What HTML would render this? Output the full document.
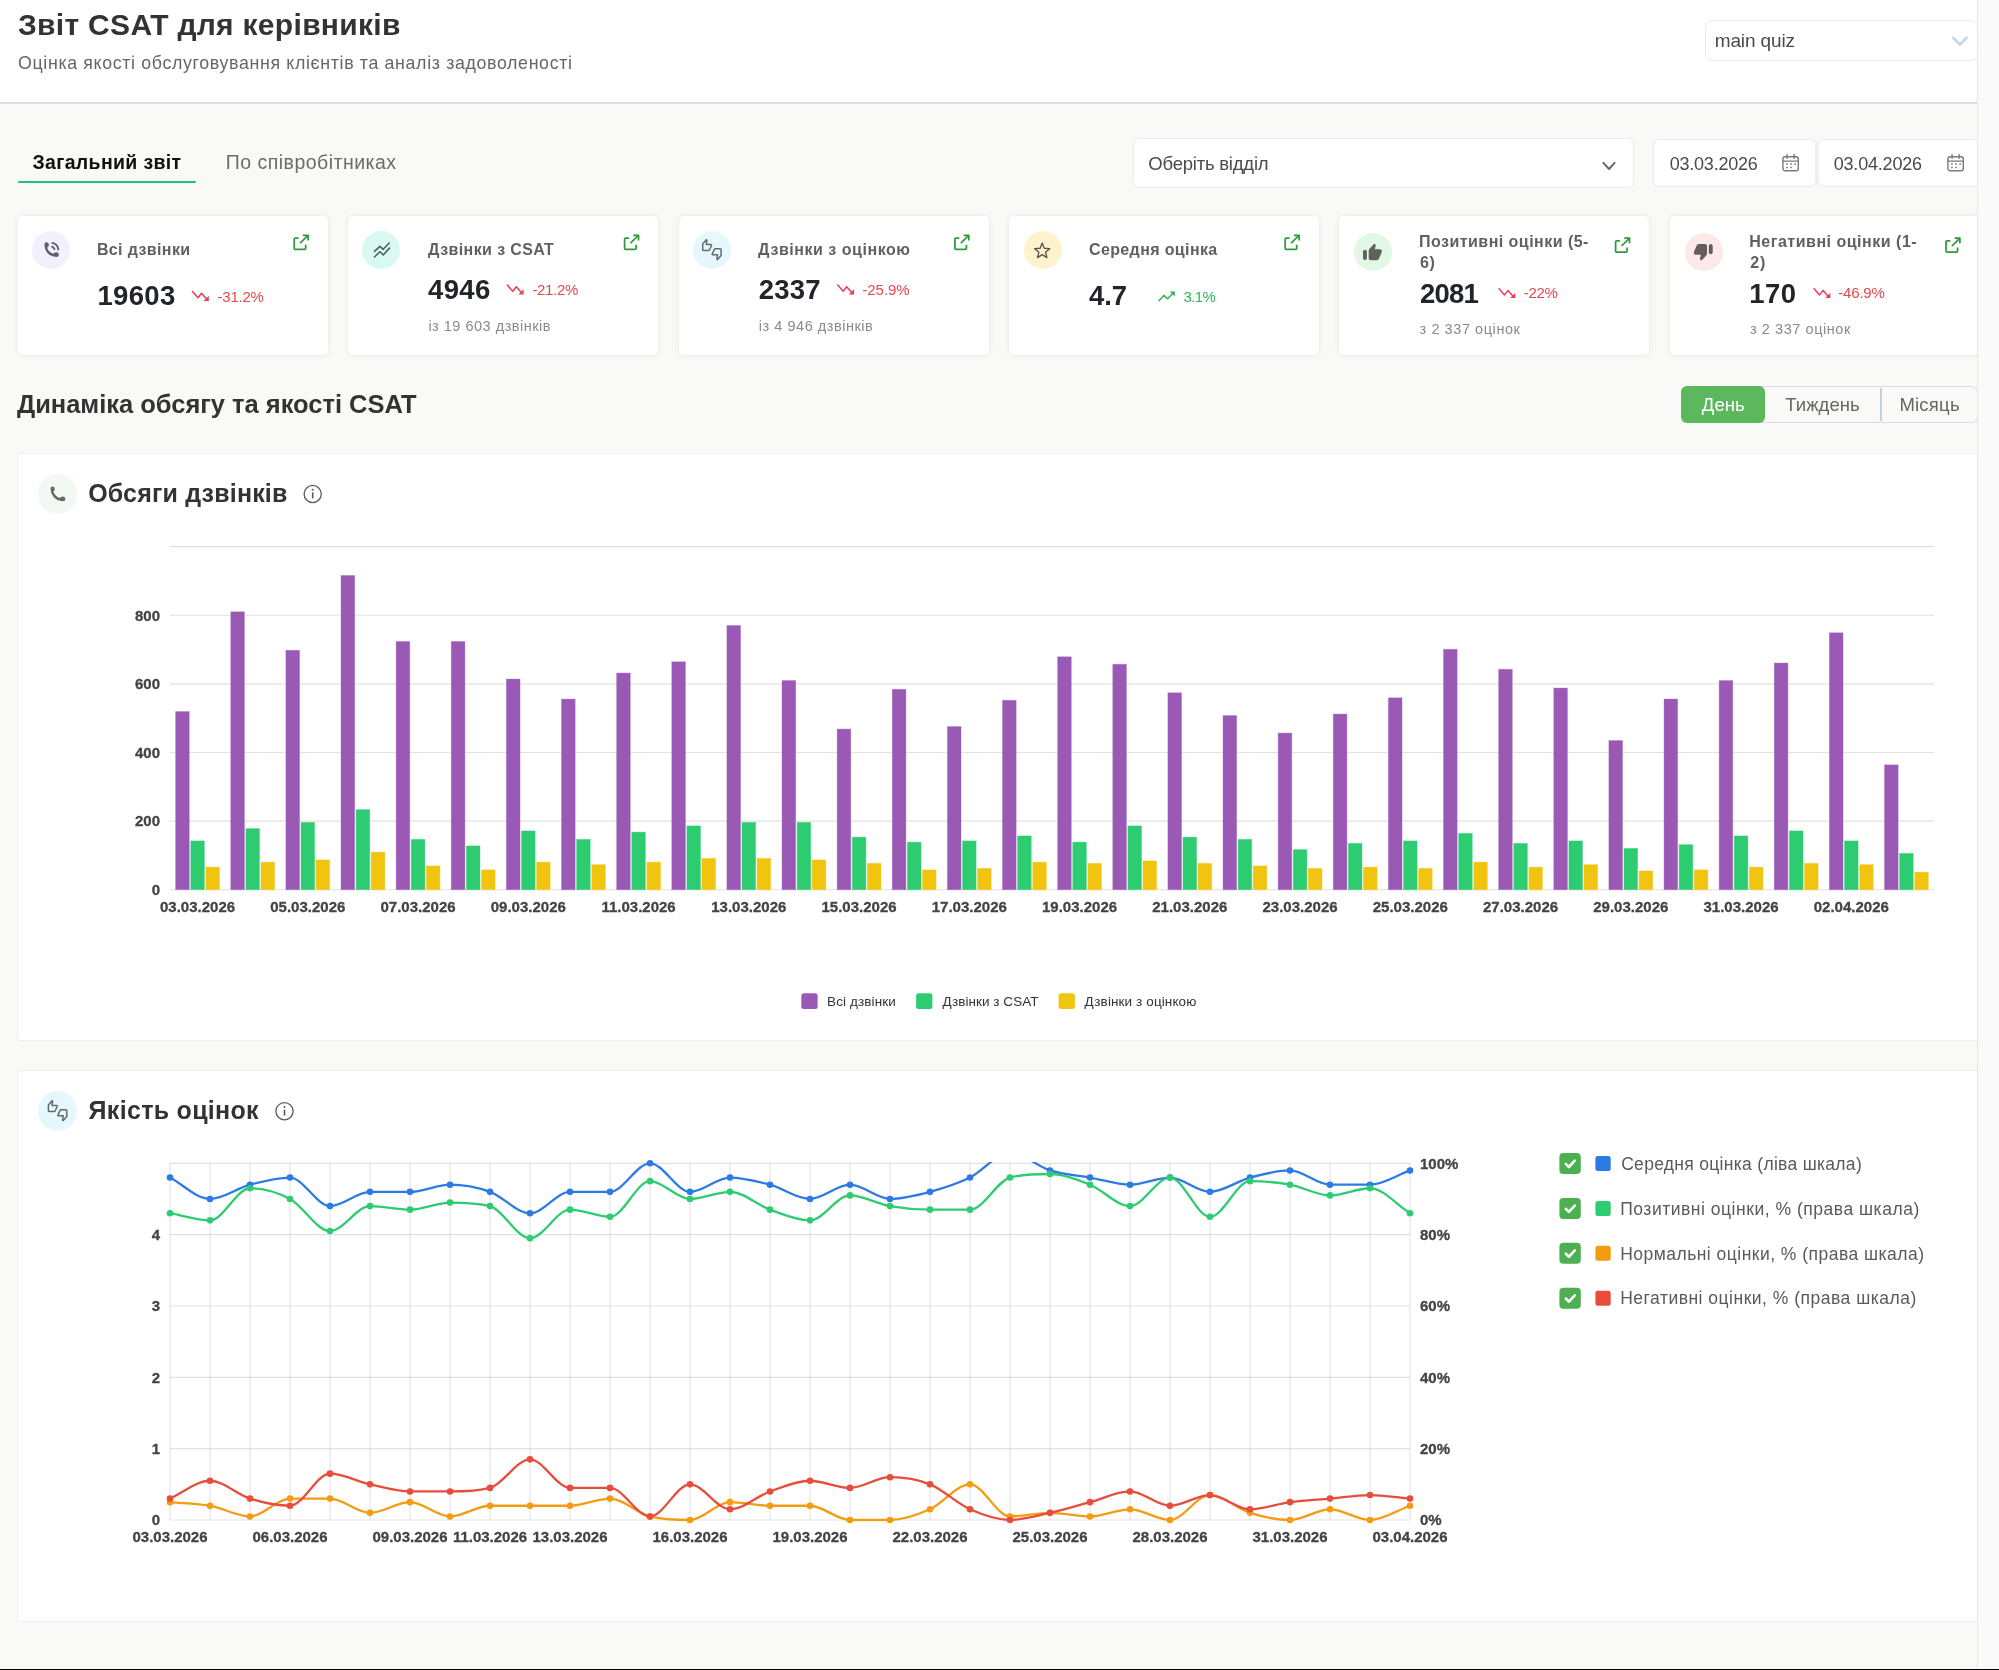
<!DOCTYPE html>
<html lang="uk"><head><meta charset="utf-8"><title>CSAT</title>
<style>
*{box-sizing:border-box;margin:0;padding:0}
html,body{width:1999px;height:1670px;overflow:hidden;background:#f9f9f7;font-family:"Liberation Sans",sans-serif;color:#333}
.abs{position:absolute}
#page{position:relative;width:1999px;height:1670px;overflow:hidden;background:#f9f9f7}
.card{position:absolute;background:#fff;border-radius:5px;box-shadow:0 0 4px rgba(70,150,90,.16)}
.circ{position:absolute;border-radius:50%}
.panel{position:absolute;background:#fff;border:1.25px solid #efefef;border-radius:2px}
svg{position:absolute;left:0;top:0;overflow:visible;will-change:transform}
svg text{font-family:"Liberation Sans",sans-serif}
.ax{font-weight:bold;font-size:15px;fill:#444;stroke:#444;stroke-width:0.3px}
.inp{position:absolute;background:#fff;border:1.25px solid #e6ebf1;border-radius:6px}
</style></head><body><div id="page">

<!-- header -->
<div class="abs" style="left:0;top:0;width:1999px;height:102px;background:#fff"></div>
<div class="abs" style="left:0;top:102px;width:1999px;height:2px;background:#dedede"></div>
<div class="abs" style="left:1705.2px;top:20.2px;width:273.2px;height:40.4px;background:#fff;border:1.25px solid #e0f2e1;border-radius:7px"></div>

<!-- tabs -->
<div class="abs" style="left:17.5px;top:181px;width:178.8px;height:2.2px;background:#22c17a;border-radius:1px"></div>

<!-- filters -->
<div class="inp" style="left:1133px;top:138px;width:500.5px;height:50.3px;border-color:#ececec"></div>
<div class="inp" style="left:1653.4px;top:138.8px;width:162.4px;height:47.8px"></div>
<div class="inp" style="left:1818px;top:138.8px;width:180px;height:47.8px"></div>
<div class="abs" style="left:1815.4px;top:142px;width:3.4px;height:41.5px;background:#edf1f6"></div>

<!-- KPI cards -->
<div class="card" style="left:18.0px;top:216.3px;width:310px;height:138.6px"></div>
<div class="circ" style="left:32.25px;top:230.80px;width:38.2px;height:38.2px;background:#f3effd"></div>
<div class="card" style="left:348.4px;top:216.3px;width:310px;height:138.6px"></div>
<div class="circ" style="left:362.20px;top:230.80px;width:38.2px;height:38.2px;background:#d9faf3"></div>
<div class="card" style="left:678.7px;top:216.3px;width:310px;height:138.6px"></div>
<div class="circ" style="left:692.80px;top:230.80px;width:38.2px;height:38.2px;background:#e6f8fd"></div>
<div class="card" style="left:1009.0px;top:216.3px;width:310px;height:138.6px"></div>
<div class="circ" style="left:1023.50px;top:230.80px;width:38.2px;height:38.2px;background:#fef3cd"></div>
<div class="card" style="left:1339.4px;top:216.3px;width:310px;height:138.6px"></div>
<div class="circ" style="left:1354.00px;top:233.30px;width:38.2px;height:38.2px;background:#e3f7e5"></div>
<div class="card" style="left:1669.8px;top:216.3px;width:310px;height:138.6px"></div>
<div class="circ" style="left:1684.60px;top:233.30px;width:38.2px;height:38.2px;background:#fde8ea"></div>

<!-- segmented control -->
<div class="abs" style="left:1690px;top:386px;width:288px;height:36.6px;border:1.25px solid #d5dde7;border-radius:7px;background:#f9f9f7"></div>
<div class="abs" style="left:1681.4px;top:386px;width:83.5px;height:36.6px;border-radius:6px;background:#5cb85c"></div>
<div class="abs" style="left:1880.4px;top:388px;width:1.5px;height:32.6px;background:#c3d0e0"></div>

<!-- panels -->
<div class="panel" style="left:17.4px;top:453px;width:1990px;height:587.6px"></div>
<div class="circ" style="left:37.9px;top:474.1px;width:39.6px;height:39.6px;background:#f2f9f5"></div>
<div class="panel" style="left:17.4px;top:1070.2px;width:1990px;height:551.6px"></div>
<div class="circ" style="left:37.8px;top:1091px;width:39.6px;height:39.6px;background:#e6f8fd"></div>

<svg width="1999" height="1670" viewBox="0 0 1999 1670">
<line x1="170.0" x2="1934.0" y1="889.70" y2="889.70" stroke="#e2e2e2" stroke-width="1.1"/>
<line x1="170.0" x2="1934.0" y1="821.08" y2="821.08" stroke="#e2e2e2" stroke-width="1.1"/>
<line x1="170.0" x2="1934.0" y1="752.46" y2="752.46" stroke="#e2e2e2" stroke-width="1.1"/>
<line x1="170.0" x2="1934.0" y1="683.84" y2="683.84" stroke="#e2e2e2" stroke-width="1.1"/>
<line x1="170.0" x2="1934.0" y1="615.22" y2="615.22" stroke="#e2e2e2" stroke-width="1.1"/>
<line x1="170.0" x2="1934.0" y1="546.60" y2="546.60" stroke="#e2e2e2" stroke-width="1.1"/>
<rect x="175.66" y="711.59" width="13.60" height="178.11" fill="#9b59b6" stroke="#9b59b6" stroke-opacity="0.4" stroke-width="0.9"/>
<rect x="190.76" y="840.90" width="13.60" height="48.80" fill="#2ecc71" stroke="#2ecc71" stroke-opacity="0.4" stroke-width="0.9"/>
<rect x="205.86" y="867.16" width="13.60" height="22.54" fill="#f1c40f" stroke="#f1c40f" stroke-opacity="0.4" stroke-width="0.9"/>
<rect x="230.79" y="611.79" width="13.60" height="277.91" fill="#9b59b6" stroke="#9b59b6" stroke-opacity="0.4" stroke-width="0.9"/>
<rect x="245.89" y="828.64" width="13.60" height="61.06" fill="#2ecc71" stroke="#2ecc71" stroke-opacity="0.4" stroke-width="0.9"/>
<rect x="260.99" y="862.16" width="13.60" height="27.54" fill="#f1c40f" stroke="#f1c40f" stroke-opacity="0.4" stroke-width="0.9"/>
<rect x="285.91" y="650.31" width="13.60" height="239.39" fill="#9b59b6" stroke="#9b59b6" stroke-opacity="0.4" stroke-width="0.9"/>
<rect x="301.01" y="822.39" width="13.60" height="67.31" fill="#2ecc71" stroke="#2ecc71" stroke-opacity="0.4" stroke-width="0.9"/>
<rect x="316.11" y="859.91" width="13.60" height="29.79" fill="#f1c40f" stroke="#f1c40f" stroke-opacity="0.4" stroke-width="0.9"/>
<rect x="341.04" y="575.52" width="13.60" height="314.18" fill="#9b59b6" stroke="#9b59b6" stroke-opacity="0.4" stroke-width="0.9"/>
<rect x="356.14" y="809.63" width="13.60" height="80.07" fill="#2ecc71" stroke="#2ecc71" stroke-opacity="0.4" stroke-width="0.9"/>
<rect x="371.24" y="852.16" width="13.60" height="37.54" fill="#f1c40f" stroke="#f1c40f" stroke-opacity="0.4" stroke-width="0.9"/>
<rect x="396.16" y="641.55" width="13.60" height="248.15" fill="#9b59b6" stroke="#9b59b6" stroke-opacity="0.4" stroke-width="0.9"/>
<rect x="411.26" y="839.40" width="13.60" height="50.30" fill="#2ecc71" stroke="#2ecc71" stroke-opacity="0.4" stroke-width="0.9"/>
<rect x="426.36" y="865.91" width="13.60" height="23.79" fill="#f1c40f" stroke="#f1c40f" stroke-opacity="0.4" stroke-width="0.9"/>
<rect x="451.29" y="641.55" width="13.60" height="248.15" fill="#9b59b6" stroke="#9b59b6" stroke-opacity="0.4" stroke-width="0.9"/>
<rect x="466.39" y="845.90" width="13.60" height="43.80" fill="#2ecc71" stroke="#2ecc71" stroke-opacity="0.4" stroke-width="0.9"/>
<rect x="481.49" y="869.91" width="13.60" height="19.79" fill="#f1c40f" stroke="#f1c40f" stroke-opacity="0.4" stroke-width="0.9"/>
<rect x="506.41" y="679.07" width="13.60" height="210.63" fill="#9b59b6" stroke="#9b59b6" stroke-opacity="0.4" stroke-width="0.9"/>
<rect x="521.51" y="830.90" width="13.60" height="58.80" fill="#2ecc71" stroke="#2ecc71" stroke-opacity="0.4" stroke-width="0.9"/>
<rect x="536.61" y="862.16" width="13.60" height="27.54" fill="#f1c40f" stroke="#f1c40f" stroke-opacity="0.4" stroke-width="0.9"/>
<rect x="561.54" y="699.08" width="13.60" height="190.62" fill="#9b59b6" stroke="#9b59b6" stroke-opacity="0.4" stroke-width="0.9"/>
<rect x="576.64" y="839.40" width="13.60" height="50.30" fill="#2ecc71" stroke="#2ecc71" stroke-opacity="0.4" stroke-width="0.9"/>
<rect x="591.74" y="864.66" width="13.60" height="25.04" fill="#f1c40f" stroke="#f1c40f" stroke-opacity="0.4" stroke-width="0.9"/>
<rect x="616.66" y="673.07" width="13.60" height="216.63" fill="#9b59b6" stroke="#9b59b6" stroke-opacity="0.4" stroke-width="0.9"/>
<rect x="631.76" y="832.15" width="13.60" height="57.55" fill="#2ecc71" stroke="#2ecc71" stroke-opacity="0.4" stroke-width="0.9"/>
<rect x="646.86" y="862.16" width="13.60" height="27.54" fill="#f1c40f" stroke="#f1c40f" stroke-opacity="0.4" stroke-width="0.9"/>
<rect x="671.79" y="661.81" width="13.60" height="227.89" fill="#9b59b6" stroke="#9b59b6" stroke-opacity="0.4" stroke-width="0.9"/>
<rect x="686.89" y="825.89" width="13.60" height="63.81" fill="#2ecc71" stroke="#2ecc71" stroke-opacity="0.4" stroke-width="0.9"/>
<rect x="701.99" y="858.41" width="13.60" height="31.29" fill="#f1c40f" stroke="#f1c40f" stroke-opacity="0.4" stroke-width="0.9"/>
<rect x="726.91" y="625.54" width="13.60" height="264.16" fill="#9b59b6" stroke="#9b59b6" stroke-opacity="0.4" stroke-width="0.9"/>
<rect x="742.01" y="822.39" width="13.60" height="67.31" fill="#2ecc71" stroke="#2ecc71" stroke-opacity="0.4" stroke-width="0.9"/>
<rect x="757.11" y="858.41" width="13.60" height="31.29" fill="#f1c40f" stroke="#f1c40f" stroke-opacity="0.4" stroke-width="0.9"/>
<rect x="782.04" y="680.57" width="13.60" height="209.13" fill="#9b59b6" stroke="#9b59b6" stroke-opacity="0.4" stroke-width="0.9"/>
<rect x="797.14" y="822.39" width="13.60" height="67.31" fill="#2ecc71" stroke="#2ecc71" stroke-opacity="0.4" stroke-width="0.9"/>
<rect x="812.24" y="859.91" width="13.60" height="29.79" fill="#f1c40f" stroke="#f1c40f" stroke-opacity="0.4" stroke-width="0.9"/>
<rect x="837.16" y="729.09" width="13.60" height="160.61" fill="#9b59b6" stroke="#9b59b6" stroke-opacity="0.4" stroke-width="0.9"/>
<rect x="852.26" y="837.15" width="13.60" height="52.55" fill="#2ecc71" stroke="#2ecc71" stroke-opacity="0.4" stroke-width="0.9"/>
<rect x="867.36" y="863.41" width="13.60" height="26.29" fill="#f1c40f" stroke="#f1c40f" stroke-opacity="0.4" stroke-width="0.9"/>
<rect x="892.29" y="689.32" width="13.60" height="200.38" fill="#9b59b6" stroke="#9b59b6" stroke-opacity="0.4" stroke-width="0.9"/>
<rect x="907.39" y="842.15" width="13.60" height="47.55" fill="#2ecc71" stroke="#2ecc71" stroke-opacity="0.4" stroke-width="0.9"/>
<rect x="922.49" y="869.91" width="13.60" height="19.79" fill="#f1c40f" stroke="#f1c40f" stroke-opacity="0.4" stroke-width="0.9"/>
<rect x="947.41" y="726.59" width="13.60" height="163.11" fill="#9b59b6" stroke="#9b59b6" stroke-opacity="0.4" stroke-width="0.9"/>
<rect x="962.51" y="840.90" width="13.60" height="48.80" fill="#2ecc71" stroke="#2ecc71" stroke-opacity="0.4" stroke-width="0.9"/>
<rect x="977.61" y="868.41" width="13.60" height="21.29" fill="#f1c40f" stroke="#f1c40f" stroke-opacity="0.4" stroke-width="0.9"/>
<rect x="1002.54" y="700.33" width="13.60" height="189.37" fill="#9b59b6" stroke="#9b59b6" stroke-opacity="0.4" stroke-width="0.9"/>
<rect x="1017.64" y="835.90" width="13.60" height="53.80" fill="#2ecc71" stroke="#2ecc71" stroke-opacity="0.4" stroke-width="0.9"/>
<rect x="1032.74" y="862.16" width="13.60" height="27.54" fill="#f1c40f" stroke="#f1c40f" stroke-opacity="0.4" stroke-width="0.9"/>
<rect x="1057.66" y="656.81" width="13.60" height="232.89" fill="#9b59b6" stroke="#9b59b6" stroke-opacity="0.4" stroke-width="0.9"/>
<rect x="1072.76" y="842.15" width="13.60" height="47.55" fill="#2ecc71" stroke="#2ecc71" stroke-opacity="0.4" stroke-width="0.9"/>
<rect x="1087.86" y="863.41" width="13.60" height="26.29" fill="#f1c40f" stroke="#f1c40f" stroke-opacity="0.4" stroke-width="0.9"/>
<rect x="1112.79" y="664.31" width="13.60" height="225.39" fill="#9b59b6" stroke="#9b59b6" stroke-opacity="0.4" stroke-width="0.9"/>
<rect x="1127.89" y="825.89" width="13.60" height="63.81" fill="#2ecc71" stroke="#2ecc71" stroke-opacity="0.4" stroke-width="0.9"/>
<rect x="1142.99" y="860.91" width="13.60" height="28.79" fill="#f1c40f" stroke="#f1c40f" stroke-opacity="0.4" stroke-width="0.9"/>
<rect x="1167.91" y="692.83" width="13.60" height="196.87" fill="#9b59b6" stroke="#9b59b6" stroke-opacity="0.4" stroke-width="0.9"/>
<rect x="1183.01" y="837.15" width="13.60" height="52.55" fill="#2ecc71" stroke="#2ecc71" stroke-opacity="0.4" stroke-width="0.9"/>
<rect x="1198.11" y="863.41" width="13.60" height="26.29" fill="#f1c40f" stroke="#f1c40f" stroke-opacity="0.4" stroke-width="0.9"/>
<rect x="1223.04" y="715.59" width="13.60" height="174.11" fill="#9b59b6" stroke="#9b59b6" stroke-opacity="0.4" stroke-width="0.9"/>
<rect x="1238.14" y="839.40" width="13.60" height="50.30" fill="#2ecc71" stroke="#2ecc71" stroke-opacity="0.4" stroke-width="0.9"/>
<rect x="1253.24" y="865.91" width="13.60" height="23.79" fill="#f1c40f" stroke="#f1c40f" stroke-opacity="0.4" stroke-width="0.9"/>
<rect x="1278.16" y="733.10" width="13.60" height="156.60" fill="#9b59b6" stroke="#9b59b6" stroke-opacity="0.4" stroke-width="0.9"/>
<rect x="1293.26" y="849.65" width="13.60" height="40.05" fill="#2ecc71" stroke="#2ecc71" stroke-opacity="0.4" stroke-width="0.9"/>
<rect x="1308.36" y="868.41" width="13.60" height="21.29" fill="#f1c40f" stroke="#f1c40f" stroke-opacity="0.4" stroke-width="0.9"/>
<rect x="1333.29" y="714.09" width="13.60" height="175.61" fill="#9b59b6" stroke="#9b59b6" stroke-opacity="0.4" stroke-width="0.9"/>
<rect x="1348.39" y="843.40" width="13.60" height="46.30" fill="#2ecc71" stroke="#2ecc71" stroke-opacity="0.4" stroke-width="0.9"/>
<rect x="1363.49" y="867.16" width="13.60" height="22.54" fill="#f1c40f" stroke="#f1c40f" stroke-opacity="0.4" stroke-width="0.9"/>
<rect x="1388.41" y="697.83" width="13.60" height="191.87" fill="#9b59b6" stroke="#9b59b6" stroke-opacity="0.4" stroke-width="0.9"/>
<rect x="1403.51" y="840.90" width="13.60" height="48.80" fill="#2ecc71" stroke="#2ecc71" stroke-opacity="0.4" stroke-width="0.9"/>
<rect x="1418.61" y="868.41" width="13.60" height="21.29" fill="#f1c40f" stroke="#f1c40f" stroke-opacity="0.4" stroke-width="0.9"/>
<rect x="1443.54" y="649.30" width="13.60" height="240.40" fill="#9b59b6" stroke="#9b59b6" stroke-opacity="0.4" stroke-width="0.9"/>
<rect x="1458.64" y="833.40" width="13.60" height="56.30" fill="#2ecc71" stroke="#2ecc71" stroke-opacity="0.4" stroke-width="0.9"/>
<rect x="1473.74" y="862.16" width="13.60" height="27.54" fill="#f1c40f" stroke="#f1c40f" stroke-opacity="0.4" stroke-width="0.9"/>
<rect x="1498.66" y="669.31" width="13.60" height="220.39" fill="#9b59b6" stroke="#9b59b6" stroke-opacity="0.4" stroke-width="0.9"/>
<rect x="1513.76" y="843.40" width="13.60" height="46.30" fill="#2ecc71" stroke="#2ecc71" stroke-opacity="0.4" stroke-width="0.9"/>
<rect x="1528.86" y="867.16" width="13.60" height="22.54" fill="#f1c40f" stroke="#f1c40f" stroke-opacity="0.4" stroke-width="0.9"/>
<rect x="1553.79" y="688.07" width="13.60" height="201.63" fill="#9b59b6" stroke="#9b59b6" stroke-opacity="0.4" stroke-width="0.9"/>
<rect x="1568.89" y="840.90" width="13.60" height="48.80" fill="#2ecc71" stroke="#2ecc71" stroke-opacity="0.4" stroke-width="0.9"/>
<rect x="1583.99" y="864.66" width="13.60" height="25.04" fill="#f1c40f" stroke="#f1c40f" stroke-opacity="0.4" stroke-width="0.9"/>
<rect x="1608.91" y="740.60" width="13.60" height="149.10" fill="#9b59b6" stroke="#9b59b6" stroke-opacity="0.4" stroke-width="0.9"/>
<rect x="1624.01" y="848.40" width="13.60" height="41.30" fill="#2ecc71" stroke="#2ecc71" stroke-opacity="0.4" stroke-width="0.9"/>
<rect x="1639.11" y="870.92" width="13.60" height="18.78" fill="#f1c40f" stroke="#f1c40f" stroke-opacity="0.4" stroke-width="0.9"/>
<rect x="1664.04" y="699.08" width="13.60" height="190.62" fill="#9b59b6" stroke="#9b59b6" stroke-opacity="0.4" stroke-width="0.9"/>
<rect x="1679.14" y="844.65" width="13.60" height="45.05" fill="#2ecc71" stroke="#2ecc71" stroke-opacity="0.4" stroke-width="0.9"/>
<rect x="1694.24" y="869.91" width="13.60" height="19.79" fill="#f1c40f" stroke="#f1c40f" stroke-opacity="0.4" stroke-width="0.9"/>
<rect x="1719.16" y="680.57" width="13.60" height="209.13" fill="#9b59b6" stroke="#9b59b6" stroke-opacity="0.4" stroke-width="0.9"/>
<rect x="1734.26" y="835.90" width="13.60" height="53.80" fill="#2ecc71" stroke="#2ecc71" stroke-opacity="0.4" stroke-width="0.9"/>
<rect x="1749.36" y="867.16" width="13.60" height="22.54" fill="#f1c40f" stroke="#f1c40f" stroke-opacity="0.4" stroke-width="0.9"/>
<rect x="1774.29" y="663.06" width="13.60" height="226.64" fill="#9b59b6" stroke="#9b59b6" stroke-opacity="0.4" stroke-width="0.9"/>
<rect x="1789.39" y="830.90" width="13.60" height="58.80" fill="#2ecc71" stroke="#2ecc71" stroke-opacity="0.4" stroke-width="0.9"/>
<rect x="1804.49" y="863.41" width="13.60" height="26.29" fill="#f1c40f" stroke="#f1c40f" stroke-opacity="0.4" stroke-width="0.9"/>
<rect x="1829.41" y="632.80" width="13.60" height="256.90" fill="#9b59b6" stroke="#9b59b6" stroke-opacity="0.4" stroke-width="0.9"/>
<rect x="1844.51" y="840.90" width="13.60" height="48.80" fill="#2ecc71" stroke="#2ecc71" stroke-opacity="0.4" stroke-width="0.9"/>
<rect x="1859.61" y="864.66" width="13.60" height="25.04" fill="#f1c40f" stroke="#f1c40f" stroke-opacity="0.4" stroke-width="0.9"/>
<rect x="1884.54" y="764.86" width="13.60" height="124.84" fill="#9b59b6" stroke="#9b59b6" stroke-opacity="0.4" stroke-width="0.9"/>
<rect x="1899.64" y="853.41" width="13.60" height="36.29" fill="#2ecc71" stroke="#2ecc71" stroke-opacity="0.4" stroke-width="0.9"/>
<rect x="1914.74" y="872.17" width="13.60" height="17.53" fill="#f1c40f" stroke="#f1c40f" stroke-opacity="0.4" stroke-width="0.9"/>
<text x="160" y="895.10" text-anchor="end" class="ax">0</text>
<text x="160" y="826.48" text-anchor="end" class="ax">200</text>
<text x="160" y="757.86" text-anchor="end" class="ax">400</text>
<text x="160" y="689.24" text-anchor="end" class="ax">600</text>
<text x="160" y="620.62" text-anchor="end" class="ax">800</text>
<text x="197.56" y="912.3" text-anchor="middle" class="ax">03.03.2026</text>
<text x="307.81" y="912.3" text-anchor="middle" class="ax">05.03.2026</text>
<text x="418.06" y="912.3" text-anchor="middle" class="ax">07.03.2026</text>
<text x="528.31" y="912.3" text-anchor="middle" class="ax">09.03.2026</text>
<text x="638.56" y="912.3" text-anchor="middle" class="ax">11.03.2026</text>
<text x="748.81" y="912.3" text-anchor="middle" class="ax">13.03.2026</text>
<text x="859.06" y="912.3" text-anchor="middle" class="ax">15.03.2026</text>
<text x="969.31" y="912.3" text-anchor="middle" class="ax">17.03.2026</text>
<text x="1079.56" y="912.3" text-anchor="middle" class="ax">19.03.2026</text>
<text x="1189.81" y="912.3" text-anchor="middle" class="ax">21.03.2026</text>
<text x="1300.06" y="912.3" text-anchor="middle" class="ax">23.03.2026</text>
<text x="1410.31" y="912.3" text-anchor="middle" class="ax">25.03.2026</text>
<text x="1520.56" y="912.3" text-anchor="middle" class="ax">27.03.2026</text>
<text x="1630.81" y="912.3" text-anchor="middle" class="ax">29.03.2026</text>
<text x="1741.06" y="912.3" text-anchor="middle" class="ax">31.03.2026</text>
<text x="1851.31" y="912.3" text-anchor="middle" class="ax">02.04.2026</text>
<clipPath id="lc"><rect x="166.0" y="1161.8999999999999" width="1248.0" height="359.50000000000006"/></clipPath>
<line x1="170.00" x2="170.00" y1="1163.3" y2="1520.0" stroke="rgba(0,0,0,0.115)" stroke-width="1.15"/>
<line x1="210.00" x2="210.00" y1="1163.3" y2="1520.0" stroke="rgba(0,0,0,0.115)" stroke-width="1.15"/>
<line x1="250.00" x2="250.00" y1="1163.3" y2="1520.0" stroke="rgba(0,0,0,0.115)" stroke-width="1.15"/>
<line x1="290.00" x2="290.00" y1="1163.3" y2="1520.0" stroke="rgba(0,0,0,0.115)" stroke-width="1.15"/>
<line x1="330.00" x2="330.00" y1="1163.3" y2="1520.0" stroke="rgba(0,0,0,0.115)" stroke-width="1.15"/>
<line x1="370.00" x2="370.00" y1="1163.3" y2="1520.0" stroke="rgba(0,0,0,0.115)" stroke-width="1.15"/>
<line x1="410.00" x2="410.00" y1="1163.3" y2="1520.0" stroke="rgba(0,0,0,0.115)" stroke-width="1.15"/>
<line x1="450.00" x2="450.00" y1="1163.3" y2="1520.0" stroke="rgba(0,0,0,0.115)" stroke-width="1.15"/>
<line x1="490.00" x2="490.00" y1="1163.3" y2="1520.0" stroke="rgba(0,0,0,0.115)" stroke-width="1.15"/>
<line x1="530.00" x2="530.00" y1="1163.3" y2="1520.0" stroke="rgba(0,0,0,0.115)" stroke-width="1.15"/>
<line x1="570.00" x2="570.00" y1="1163.3" y2="1520.0" stroke="rgba(0,0,0,0.115)" stroke-width="1.15"/>
<line x1="610.00" x2="610.00" y1="1163.3" y2="1520.0" stroke="rgba(0,0,0,0.115)" stroke-width="1.15"/>
<line x1="650.00" x2="650.00" y1="1163.3" y2="1520.0" stroke="rgba(0,0,0,0.115)" stroke-width="1.15"/>
<line x1="690.00" x2="690.00" y1="1163.3" y2="1520.0" stroke="rgba(0,0,0,0.115)" stroke-width="1.15"/>
<line x1="730.00" x2="730.00" y1="1163.3" y2="1520.0" stroke="rgba(0,0,0,0.115)" stroke-width="1.15"/>
<line x1="770.00" x2="770.00" y1="1163.3" y2="1520.0" stroke="rgba(0,0,0,0.115)" stroke-width="1.15"/>
<line x1="810.00" x2="810.00" y1="1163.3" y2="1520.0" stroke="rgba(0,0,0,0.115)" stroke-width="1.15"/>
<line x1="850.00" x2="850.00" y1="1163.3" y2="1520.0" stroke="rgba(0,0,0,0.115)" stroke-width="1.15"/>
<line x1="890.00" x2="890.00" y1="1163.3" y2="1520.0" stroke="rgba(0,0,0,0.115)" stroke-width="1.15"/>
<line x1="930.00" x2="930.00" y1="1163.3" y2="1520.0" stroke="rgba(0,0,0,0.115)" stroke-width="1.15"/>
<line x1="970.00" x2="970.00" y1="1163.3" y2="1520.0" stroke="rgba(0,0,0,0.115)" stroke-width="1.15"/>
<line x1="1010.00" x2="1010.00" y1="1163.3" y2="1520.0" stroke="rgba(0,0,0,0.115)" stroke-width="1.15"/>
<line x1="1050.00" x2="1050.00" y1="1163.3" y2="1520.0" stroke="rgba(0,0,0,0.115)" stroke-width="1.15"/>
<line x1="1090.00" x2="1090.00" y1="1163.3" y2="1520.0" stroke="rgba(0,0,0,0.115)" stroke-width="1.15"/>
<line x1="1130.00" x2="1130.00" y1="1163.3" y2="1520.0" stroke="rgba(0,0,0,0.115)" stroke-width="1.15"/>
<line x1="1170.00" x2="1170.00" y1="1163.3" y2="1520.0" stroke="rgba(0,0,0,0.115)" stroke-width="1.15"/>
<line x1="1210.00" x2="1210.00" y1="1163.3" y2="1520.0" stroke="rgba(0,0,0,0.115)" stroke-width="1.15"/>
<line x1="1250.00" x2="1250.00" y1="1163.3" y2="1520.0" stroke="rgba(0,0,0,0.115)" stroke-width="1.15"/>
<line x1="1290.00" x2="1290.00" y1="1163.3" y2="1520.0" stroke="rgba(0,0,0,0.115)" stroke-width="1.15"/>
<line x1="1330.00" x2="1330.00" y1="1163.3" y2="1520.0" stroke="rgba(0,0,0,0.115)" stroke-width="1.15"/>
<line x1="1370.00" x2="1370.00" y1="1163.3" y2="1520.0" stroke="rgba(0,0,0,0.115)" stroke-width="1.15"/>
<line x1="1410.00" x2="1410.00" y1="1163.3" y2="1520.0" stroke="rgba(0,0,0,0.115)" stroke-width="1.15"/>
<line x1="170.0" x2="1410.0" y1="1520.00" y2="1520.00" stroke="rgba(0,0,0,0.115)" stroke-width="1.15"/>
<line x1="170.0" x2="1410.0" y1="1448.66" y2="1448.66" stroke="rgba(0,0,0,0.115)" stroke-width="1.15"/>
<line x1="170.0" x2="1410.0" y1="1377.32" y2="1377.32" stroke="rgba(0,0,0,0.115)" stroke-width="1.15"/>
<line x1="170.0" x2="1410.0" y1="1305.98" y2="1305.98" stroke="rgba(0,0,0,0.115)" stroke-width="1.15"/>
<line x1="170.0" x2="1410.0" y1="1234.64" y2="1234.64" stroke="rgba(0,0,0,0.115)" stroke-width="1.15"/>
<line x1="170.0" x2="1410.0" y1="1163.30" y2="1163.30" stroke="rgba(0,0,0,0.115)" stroke-width="1.15"/>
<g clip-path="url(#lc)">
<path d="M170.00,1177.57C183.33,1184.70 196.67,1198.97 210.00,1198.97C223.33,1198.97 236.67,1188.27 250.00,1184.70C263.33,1181.13 276.67,1177.57 290.00,1177.57C303.33,1177.57 316.67,1206.10 330.00,1206.10C343.33,1206.10 356.67,1191.84 370.00,1191.84C383.33,1191.84 396.67,1191.84 410.00,1191.84C423.33,1191.84 436.67,1184.70 450.00,1184.70C463.33,1184.70 476.67,1187.08 490.00,1191.84C503.33,1196.59 516.67,1213.24 530.00,1213.24C543.33,1213.24 556.67,1191.84 570.00,1191.84C583.33,1191.84 596.67,1191.84 610.00,1191.84C623.33,1191.84 636.67,1163.30 650.00,1163.30C663.33,1163.30 676.67,1191.84 690.00,1191.84C703.33,1191.84 716.67,1177.57 730.00,1177.57C743.33,1177.57 756.67,1181.13 770.00,1184.70C783.33,1188.27 796.67,1198.97 810.00,1198.97C823.33,1198.97 836.67,1184.70 850.00,1184.70C863.33,1184.70 876.67,1198.97 890.00,1198.97C903.33,1198.97 916.67,1195.40 930.00,1191.84C943.33,1188.27 956.67,1184.11 970.00,1177.57C983.33,1171.03 996.67,1152.60 1010.00,1152.60C1023.33,1152.60 1036.67,1166.27 1050.00,1170.43C1063.33,1174.60 1076.67,1175.19 1090.00,1177.57C1103.33,1179.95 1116.67,1184.70 1130.00,1184.70C1143.33,1184.70 1156.67,1177.57 1170.00,1177.57C1183.33,1177.57 1196.67,1191.84 1210.00,1191.84C1223.33,1191.84 1236.67,1181.13 1250.00,1177.57C1263.33,1174.00 1276.67,1170.43 1290.00,1170.43C1303.33,1170.43 1316.67,1184.70 1330.00,1184.70C1343.33,1184.70 1356.67,1184.70 1370.00,1184.70C1383.33,1184.70 1396.67,1175.19 1410.00,1170.43" fill="none" stroke="#2c7be5" stroke-width="2.3" stroke-linejoin="round"/>
<path d="M170.00,1213.24C183.33,1215.62 196.67,1220.37 210.00,1220.37C223.33,1220.37 236.67,1188.27 250.00,1188.27C263.33,1188.27 276.67,1191.84 290.00,1198.97C303.33,1206.10 316.67,1231.07 330.00,1231.07C343.33,1231.07 356.67,1206.10 370.00,1206.10C383.33,1206.10 396.67,1209.67 410.00,1209.67C423.33,1209.67 436.67,1202.54 450.00,1202.54C463.33,1202.54 476.67,1202.54 490.00,1206.10C503.33,1209.67 516.67,1238.21 530.00,1238.21C543.33,1238.21 556.67,1209.67 570.00,1209.67C583.33,1209.67 596.67,1216.80 610.00,1216.80C623.33,1216.80 636.67,1181.13 650.00,1181.13C663.33,1181.13 676.67,1198.97 690.00,1198.97C703.33,1198.97 716.67,1191.84 730.00,1191.84C743.33,1191.84 756.67,1204.91 770.00,1209.67C783.33,1214.43 796.67,1220.37 810.00,1220.37C823.33,1220.37 836.67,1195.40 850.00,1195.40C863.33,1195.40 876.67,1203.73 890.00,1206.10C903.33,1208.48 916.67,1209.67 930.00,1209.67C943.33,1209.67 956.67,1209.67 970.00,1209.67C983.33,1209.67 996.67,1181.13 1010.00,1177.57C1023.33,1174.00 1036.67,1174.00 1050.00,1174.00C1063.33,1174.00 1076.67,1179.35 1090.00,1184.70C1103.33,1190.05 1116.67,1206.10 1130.00,1206.10C1143.33,1206.10 1156.67,1177.57 1170.00,1177.57C1183.33,1177.57 1196.67,1216.80 1210.00,1216.80C1223.33,1216.80 1236.67,1181.13 1250.00,1181.13C1263.33,1181.13 1276.67,1182.32 1290.00,1184.70C1303.33,1187.08 1316.67,1195.40 1330.00,1195.40C1343.33,1195.40 1356.67,1188.27 1370.00,1188.27C1383.33,1188.27 1396.67,1204.91 1410.00,1213.24" fill="none" stroke="#2ecc71" stroke-width="2.3" stroke-linejoin="round"/>
<path d="M170.00,1502.16C183.33,1503.35 196.67,1503.35 210.00,1505.73C223.33,1508.11 236.67,1516.43 250.00,1516.43C263.33,1516.43 276.67,1498.60 290.00,1498.60C303.33,1498.60 316.67,1498.60 330.00,1498.60C343.33,1498.60 356.67,1512.87 370.00,1512.87C383.33,1512.87 396.67,1502.16 410.00,1502.16C423.33,1502.16 436.67,1516.43 450.00,1516.43C463.33,1516.43 476.67,1505.73 490.00,1505.73C503.33,1505.73 516.67,1505.73 530.00,1505.73C543.33,1505.73 556.67,1505.73 570.00,1505.73C583.33,1505.73 596.67,1498.60 610.00,1498.60C623.33,1498.60 636.67,1512.87 650.00,1516.43C663.33,1520.00 676.67,1520.00 690.00,1520.00C703.33,1520.00 716.67,1502.16 730.00,1502.16C743.33,1502.16 756.67,1505.73 770.00,1505.73C783.33,1505.73 796.67,1505.73 810.00,1505.73C823.33,1505.73 836.67,1520.00 850.00,1520.00C863.33,1520.00 876.67,1520.00 890.00,1520.00C903.33,1520.00 916.67,1515.24 930.00,1509.30C943.33,1503.35 956.67,1484.33 970.00,1484.33C983.33,1484.33 996.67,1516.43 1010.00,1516.43C1023.33,1516.43 1036.67,1512.87 1050.00,1512.87C1063.33,1512.87 1076.67,1516.43 1090.00,1516.43C1103.33,1516.43 1116.67,1509.30 1130.00,1509.30C1143.33,1509.30 1156.67,1520.00 1170.00,1520.00C1183.33,1520.00 1196.67,1495.03 1210.00,1495.03C1223.33,1495.03 1236.67,1508.70 1250.00,1512.87C1263.33,1517.03 1276.67,1520.00 1290.00,1520.00C1303.33,1520.00 1316.67,1509.30 1330.00,1509.30C1343.33,1509.30 1356.67,1520.00 1370.00,1520.00C1383.33,1520.00 1396.67,1510.49 1410.00,1505.73" fill="none" stroke="#f39c12" stroke-width="2.3" stroke-linejoin="round"/>
<path d="M170.00,1498.60C183.33,1492.65 196.67,1480.76 210.00,1480.76C223.33,1480.76 236.67,1494.44 250.00,1498.60C263.33,1502.76 276.67,1505.73 290.00,1505.73C303.33,1505.73 316.67,1473.63 330.00,1473.63C343.33,1473.63 356.67,1481.36 370.00,1484.33C383.33,1487.30 396.67,1491.46 410.00,1491.46C423.33,1491.46 436.67,1491.46 450.00,1491.46C463.33,1491.46 476.67,1491.46 490.00,1487.90C503.33,1484.33 516.67,1459.36 530.00,1459.36C543.33,1459.36 556.67,1487.90 570.00,1487.90C583.33,1487.90 596.67,1487.90 610.00,1487.90C623.33,1487.90 636.67,1516.43 650.00,1516.43C663.33,1516.43 676.67,1484.33 690.00,1484.33C703.33,1484.33 716.67,1509.30 730.00,1509.30C743.33,1509.30 756.67,1496.22 770.00,1491.46C783.33,1486.71 796.67,1480.76 810.00,1480.76C823.33,1480.76 836.67,1487.90 850.00,1487.90C863.33,1487.90 876.67,1477.20 890.00,1477.20C903.33,1477.20 916.67,1478.98 930.00,1484.33C943.33,1489.68 956.67,1503.35 970.00,1509.30C983.33,1515.24 996.67,1520.00 1010.00,1520.00C1023.33,1520.00 1036.67,1515.84 1050.00,1512.87C1063.33,1509.89 1076.67,1505.73 1090.00,1502.16C1103.33,1498.60 1116.67,1491.46 1130.00,1491.46C1143.33,1491.46 1156.67,1505.73 1170.00,1505.73C1183.33,1505.73 1196.67,1495.03 1210.00,1495.03C1223.33,1495.03 1236.67,1509.30 1250.00,1509.30C1263.33,1509.30 1276.67,1503.95 1290.00,1502.16C1303.33,1500.38 1316.67,1499.79 1330.00,1498.60C1343.33,1497.41 1356.67,1495.03 1370.00,1495.03C1383.33,1495.03 1396.67,1497.41 1410.00,1498.60" fill="none" stroke="#e74c3c" stroke-width="2.3" stroke-linejoin="round"/>
</g>
<circle cx="170.00" cy="1177.57" r="3.3" fill="#2c7be5"/>
<circle cx="210.00" cy="1198.97" r="3.3" fill="#2c7be5"/>
<circle cx="250.00" cy="1184.70" r="3.3" fill="#2c7be5"/>
<circle cx="290.00" cy="1177.57" r="3.3" fill="#2c7be5"/>
<circle cx="330.00" cy="1206.10" r="3.3" fill="#2c7be5"/>
<circle cx="370.00" cy="1191.84" r="3.3" fill="#2c7be5"/>
<circle cx="410.00" cy="1191.84" r="3.3" fill="#2c7be5"/>
<circle cx="450.00" cy="1184.70" r="3.3" fill="#2c7be5"/>
<circle cx="490.00" cy="1191.84" r="3.3" fill="#2c7be5"/>
<circle cx="530.00" cy="1213.24" r="3.3" fill="#2c7be5"/>
<circle cx="570.00" cy="1191.84" r="3.3" fill="#2c7be5"/>
<circle cx="610.00" cy="1191.84" r="3.3" fill="#2c7be5"/>
<circle cx="650.00" cy="1163.30" r="3.3" fill="#2c7be5"/>
<circle cx="690.00" cy="1191.84" r="3.3" fill="#2c7be5"/>
<circle cx="730.00" cy="1177.57" r="3.3" fill="#2c7be5"/>
<circle cx="770.00" cy="1184.70" r="3.3" fill="#2c7be5"/>
<circle cx="810.00" cy="1198.97" r="3.3" fill="#2c7be5"/>
<circle cx="850.00" cy="1184.70" r="3.3" fill="#2c7be5"/>
<circle cx="890.00" cy="1198.97" r="3.3" fill="#2c7be5"/>
<circle cx="930.00" cy="1191.84" r="3.3" fill="#2c7be5"/>
<circle cx="970.00" cy="1177.57" r="3.3" fill="#2c7be5"/>
<circle cx="1050.00" cy="1170.43" r="3.3" fill="#2c7be5"/>
<circle cx="1090.00" cy="1177.57" r="3.3" fill="#2c7be5"/>
<circle cx="1130.00" cy="1184.70" r="3.3" fill="#2c7be5"/>
<circle cx="1170.00" cy="1177.57" r="3.3" fill="#2c7be5"/>
<circle cx="1210.00" cy="1191.84" r="3.3" fill="#2c7be5"/>
<circle cx="1250.00" cy="1177.57" r="3.3" fill="#2c7be5"/>
<circle cx="1290.00" cy="1170.43" r="3.3" fill="#2c7be5"/>
<circle cx="1330.00" cy="1184.70" r="3.3" fill="#2c7be5"/>
<circle cx="1370.00" cy="1184.70" r="3.3" fill="#2c7be5"/>
<circle cx="1410.00" cy="1170.43" r="3.3" fill="#2c7be5"/>
<circle cx="170.00" cy="1213.24" r="3.3" fill="#2ecc71"/>
<circle cx="210.00" cy="1220.37" r="3.3" fill="#2ecc71"/>
<circle cx="250.00" cy="1188.27" r="3.3" fill="#2ecc71"/>
<circle cx="290.00" cy="1198.97" r="3.3" fill="#2ecc71"/>
<circle cx="330.00" cy="1231.07" r="3.3" fill="#2ecc71"/>
<circle cx="370.00" cy="1206.10" r="3.3" fill="#2ecc71"/>
<circle cx="410.00" cy="1209.67" r="3.3" fill="#2ecc71"/>
<circle cx="450.00" cy="1202.54" r="3.3" fill="#2ecc71"/>
<circle cx="490.00" cy="1206.10" r="3.3" fill="#2ecc71"/>
<circle cx="530.00" cy="1238.21" r="3.3" fill="#2ecc71"/>
<circle cx="570.00" cy="1209.67" r="3.3" fill="#2ecc71"/>
<circle cx="610.00" cy="1216.80" r="3.3" fill="#2ecc71"/>
<circle cx="650.00" cy="1181.13" r="3.3" fill="#2ecc71"/>
<circle cx="690.00" cy="1198.97" r="3.3" fill="#2ecc71"/>
<circle cx="730.00" cy="1191.84" r="3.3" fill="#2ecc71"/>
<circle cx="770.00" cy="1209.67" r="3.3" fill="#2ecc71"/>
<circle cx="810.00" cy="1220.37" r="3.3" fill="#2ecc71"/>
<circle cx="850.00" cy="1195.40" r="3.3" fill="#2ecc71"/>
<circle cx="890.00" cy="1206.10" r="3.3" fill="#2ecc71"/>
<circle cx="930.00" cy="1209.67" r="3.3" fill="#2ecc71"/>
<circle cx="970.00" cy="1209.67" r="3.3" fill="#2ecc71"/>
<circle cx="1010.00" cy="1177.57" r="3.3" fill="#2ecc71"/>
<circle cx="1050.00" cy="1174.00" r="3.3" fill="#2ecc71"/>
<circle cx="1090.00" cy="1184.70" r="3.3" fill="#2ecc71"/>
<circle cx="1130.00" cy="1206.10" r="3.3" fill="#2ecc71"/>
<circle cx="1170.00" cy="1177.57" r="3.3" fill="#2ecc71"/>
<circle cx="1210.00" cy="1216.80" r="3.3" fill="#2ecc71"/>
<circle cx="1250.00" cy="1181.13" r="3.3" fill="#2ecc71"/>
<circle cx="1290.00" cy="1184.70" r="3.3" fill="#2ecc71"/>
<circle cx="1330.00" cy="1195.40" r="3.3" fill="#2ecc71"/>
<circle cx="1370.00" cy="1188.27" r="3.3" fill="#2ecc71"/>
<circle cx="1410.00" cy="1213.24" r="3.3" fill="#2ecc71"/>
<circle cx="170.00" cy="1502.16" r="3.3" fill="#f39c12"/>
<circle cx="210.00" cy="1505.73" r="3.3" fill="#f39c12"/>
<circle cx="250.00" cy="1516.43" r="3.3" fill="#f39c12"/>
<circle cx="290.00" cy="1498.60" r="3.3" fill="#f39c12"/>
<circle cx="330.00" cy="1498.60" r="3.3" fill="#f39c12"/>
<circle cx="370.00" cy="1512.87" r="3.3" fill="#f39c12"/>
<circle cx="410.00" cy="1502.16" r="3.3" fill="#f39c12"/>
<circle cx="450.00" cy="1516.43" r="3.3" fill="#f39c12"/>
<circle cx="490.00" cy="1505.73" r="3.3" fill="#f39c12"/>
<circle cx="530.00" cy="1505.73" r="3.3" fill="#f39c12"/>
<circle cx="570.00" cy="1505.73" r="3.3" fill="#f39c12"/>
<circle cx="610.00" cy="1498.60" r="3.3" fill="#f39c12"/>
<circle cx="650.00" cy="1516.43" r="3.3" fill="#f39c12"/>
<circle cx="690.00" cy="1520.00" r="3.3" fill="#f39c12"/>
<circle cx="730.00" cy="1502.16" r="3.3" fill="#f39c12"/>
<circle cx="770.00" cy="1505.73" r="3.3" fill="#f39c12"/>
<circle cx="810.00" cy="1505.73" r="3.3" fill="#f39c12"/>
<circle cx="850.00" cy="1520.00" r="3.3" fill="#f39c12"/>
<circle cx="890.00" cy="1520.00" r="3.3" fill="#f39c12"/>
<circle cx="930.00" cy="1509.30" r="3.3" fill="#f39c12"/>
<circle cx="970.00" cy="1484.33" r="3.3" fill="#f39c12"/>
<circle cx="1010.00" cy="1516.43" r="3.3" fill="#f39c12"/>
<circle cx="1050.00" cy="1512.87" r="3.3" fill="#f39c12"/>
<circle cx="1090.00" cy="1516.43" r="3.3" fill="#f39c12"/>
<circle cx="1130.00" cy="1509.30" r="3.3" fill="#f39c12"/>
<circle cx="1170.00" cy="1520.00" r="3.3" fill="#f39c12"/>
<circle cx="1210.00" cy="1495.03" r="3.3" fill="#f39c12"/>
<circle cx="1250.00" cy="1512.87" r="3.3" fill="#f39c12"/>
<circle cx="1290.00" cy="1520.00" r="3.3" fill="#f39c12"/>
<circle cx="1330.00" cy="1509.30" r="3.3" fill="#f39c12"/>
<circle cx="1370.00" cy="1520.00" r="3.3" fill="#f39c12"/>
<circle cx="1410.00" cy="1505.73" r="3.3" fill="#f39c12"/>
<circle cx="170.00" cy="1498.60" r="3.3" fill="#e74c3c"/>
<circle cx="210.00" cy="1480.76" r="3.3" fill="#e74c3c"/>
<circle cx="250.00" cy="1498.60" r="3.3" fill="#e74c3c"/>
<circle cx="290.00" cy="1505.73" r="3.3" fill="#e74c3c"/>
<circle cx="330.00" cy="1473.63" r="3.3" fill="#e74c3c"/>
<circle cx="370.00" cy="1484.33" r="3.3" fill="#e74c3c"/>
<circle cx="410.00" cy="1491.46" r="3.3" fill="#e74c3c"/>
<circle cx="450.00" cy="1491.46" r="3.3" fill="#e74c3c"/>
<circle cx="490.00" cy="1487.90" r="3.3" fill="#e74c3c"/>
<circle cx="530.00" cy="1459.36" r="3.3" fill="#e74c3c"/>
<circle cx="570.00" cy="1487.90" r="3.3" fill="#e74c3c"/>
<circle cx="610.00" cy="1487.90" r="3.3" fill="#e74c3c"/>
<circle cx="650.00" cy="1516.43" r="3.3" fill="#e74c3c"/>
<circle cx="690.00" cy="1484.33" r="3.3" fill="#e74c3c"/>
<circle cx="730.00" cy="1509.30" r="3.3" fill="#e74c3c"/>
<circle cx="770.00" cy="1491.46" r="3.3" fill="#e74c3c"/>
<circle cx="810.00" cy="1480.76" r="3.3" fill="#e74c3c"/>
<circle cx="850.00" cy="1487.90" r="3.3" fill="#e74c3c"/>
<circle cx="890.00" cy="1477.20" r="3.3" fill="#e74c3c"/>
<circle cx="930.00" cy="1484.33" r="3.3" fill="#e74c3c"/>
<circle cx="970.00" cy="1509.30" r="3.3" fill="#e74c3c"/>
<circle cx="1010.00" cy="1520.00" r="3.3" fill="#e74c3c"/>
<circle cx="1050.00" cy="1512.87" r="3.3" fill="#e74c3c"/>
<circle cx="1090.00" cy="1502.16" r="3.3" fill="#e74c3c"/>
<circle cx="1130.00" cy="1491.46" r="3.3" fill="#e74c3c"/>
<circle cx="1170.00" cy="1505.73" r="3.3" fill="#e74c3c"/>
<circle cx="1210.00" cy="1495.03" r="3.3" fill="#e74c3c"/>
<circle cx="1250.00" cy="1509.30" r="3.3" fill="#e74c3c"/>
<circle cx="1290.00" cy="1502.16" r="3.3" fill="#e74c3c"/>
<circle cx="1330.00" cy="1498.60" r="3.3" fill="#e74c3c"/>
<circle cx="1370.00" cy="1495.03" r="3.3" fill="#e74c3c"/>
<circle cx="1410.00" cy="1498.60" r="3.3" fill="#e74c3c"/>
<text x="160" y="1525.40" text-anchor="end" class="ax">0</text>
<text x="160" y="1454.06" text-anchor="end" class="ax">1</text>
<text x="160" y="1382.72" text-anchor="end" class="ax">2</text>
<text x="160" y="1311.38" text-anchor="end" class="ax">3</text>
<text x="160" y="1240.04" text-anchor="end" class="ax">4</text>
<text x="1420" y="1525.40" text-anchor="start" class="ax">0%</text>
<text x="1420" y="1454.06" text-anchor="start" class="ax">20%</text>
<text x="1420" y="1382.72" text-anchor="start" class="ax">40%</text>
<text x="1420" y="1311.38" text-anchor="start" class="ax">60%</text>
<text x="1420" y="1240.04" text-anchor="start" class="ax">80%</text>
<text x="1420" y="1168.70" text-anchor="start" class="ax">100%</text>
<text x="170.00" y="1542.3" text-anchor="middle" class="ax">03.03.2026</text>
<text x="290.00" y="1542.3" text-anchor="middle" class="ax">06.03.2026</text>
<text x="410.00" y="1542.3" text-anchor="middle" class="ax">09.03.2026</text>
<text x="490.00" y="1542.3" text-anchor="middle" class="ax">11.03.2026</text>
<text x="570.00" y="1542.3" text-anchor="middle" class="ax">13.03.2026</text>
<text x="690.00" y="1542.3" text-anchor="middle" class="ax">16.03.2026</text>
<text x="810.00" y="1542.3" text-anchor="middle" class="ax">19.03.2026</text>
<text x="930.00" y="1542.3" text-anchor="middle" class="ax">22.03.2026</text>
<text x="1050.00" y="1542.3" text-anchor="middle" class="ax">25.03.2026</text>
<text x="1170.00" y="1542.3" text-anchor="middle" class="ax">28.03.2026</text>
<text x="1290.00" y="1542.3" text-anchor="middle" class="ax">31.03.2026</text>
<text x="1410.00" y="1542.3" text-anchor="middle" class="ax">03.04.2026</text>
<g transform="translate(51.3,249.9)"><path d="M-6.9,-5.4 Q-6.9,-7.7 -4.7,-7.7 Q-2.5,-7.7 -2.4,-5.2 Q-2.4,-3.2 -4.2,-2.2 Q-2.6,2.2 1.8,3.9 Q2.9,2.3 5,2.3 Q7.5,2.4 7.5,4.6 Q7.5,7.1 5,7.1 Q-1.2,6.6 -4.3,2.6 Q-6.9,-0.9 -6.9,-5.4 Z" fill="#5f5f68"/><path d="M1,-7.1 Q6.6,-5.9 7,-0.3" fill="none" stroke="#5f5f68" stroke-width="1.8" stroke-linecap="round"/><path d="M0.7,-3.3 Q2.8,-2.4 3.2,-0.6" fill="none" stroke="#5f5f68" stroke-width="1.7" stroke-linecap="round"/></g>
<g transform="translate(381.3,249.9)" fill="none" stroke="#50615e" stroke-width="1.6" stroke-linecap="round" stroke-linejoin="round"><path d="M-6.8,1.5 L-1.4,-3.6 L1.9,-0.6 L7.9,-6.9"/><path d="M-6.8,7.1 L-1.4,1.8 L1.9,5.1 L8.2,-1.8"/></g>
<g transform="translate(711.9,249.7)" fill="none" stroke="#636b6f" stroke-width="1.5" stroke-linejoin="round"><path d="M-5.6,-9.9 L-9.2,-5.7 V0.1 Q-9.2,0.9 -8.4,0.9 H-3.4 Q-2.8,0.9 -2.5,0.3 L-0.4,-4.2 Q-0.1,-5.1 -1,-5.1 H-5.6 L-5,-9.3 Q-5.1,-10 -5.6,-9.9 Z"/><path d="M-5.6,-9.9 L-9.2,-5.7 V0.1 Q-9.2,0.9 -8.4,0.9 H-3.4 Q-2.8,0.9 -2.5,0.3 L-0.4,-4.2 Q-0.1,-5.1 -1,-5.1 H-5.6 L-5,-9.3 Q-5.1,-10 -5.6,-9.9 Z" transform="rotate(180)"/></g>
<polygon points="1042.20,243.10 1044.26,248.27 1049.81,248.63 1045.53,252.18 1046.90,257.57 1042.20,254.60 1037.50,257.57 1038.87,252.18 1034.59,248.63 1040.14,248.27" fill="none" stroke="#5a564a" stroke-width="1.35" stroke-linejoin="round"/>
<g transform="translate(1373.1,252.15)" fill="#5c635c"><rect x="-10.1" y="-2.4" width="3.9" height="10.3" rx="1.95"/><path d="M-4.4,-1.5 Q-4.4,-2.6 -3.6,-3.5 L0.6,-8 Q1.4,-8.8 2.2,-8 Q2.8,-7.4 2.6,-6.6 L1.7,-2.8 H6.8 Q8.8,-2.8 8.8,-0.9 Q8.8,-0.3 8.6,0.2 L5.8,6.7 Q5.2,8 3.8,8 H-2.4 Q-4.4,8 -4.4,6 Z"/></g>
<g transform="translate(1702.6,251.9) rotate(180)" fill="#665c5c"><rect x="-10.1" y="-2.4" width="3.9" height="10.3" rx="1.95"/><path d="M-4.4,-1.5 Q-4.4,-2.6 -3.6,-3.5 L0.6,-8 Q1.4,-8.8 2.2,-8 Q2.8,-7.4 2.6,-6.6 L1.7,-2.8 H6.8 Q8.8,-2.8 8.8,-0.9 Q8.8,-0.3 8.6,0.2 L5.8,6.7 Q5.2,8 3.8,8 H-2.4 Q-4.4,8 -4.4,6 Z"/></g>
<g transform="translate(293.3,234.4)" fill="none" stroke="#2e9a3a" stroke-width="1.75" stroke-linejoin="round"><path d="M5.3,3.6 H1.9 Q0.9,3.6 0.9,4.6 V13.9 Q0.9,14.9 1.9,14.9 H11.4 Q12.4,14.9 12.4,13.9 V10.3"/><path d="M6.8,8.8 L14.6,1.1 M9.6,0.9 H14.8 V6.1"/></g>
<g transform="translate(623.7,234.4)" fill="none" stroke="#2e9a3a" stroke-width="1.75" stroke-linejoin="round"><path d="M5.3,3.6 H1.9 Q0.9,3.6 0.9,4.6 V13.9 Q0.9,14.9 1.9,14.9 H11.4 Q12.4,14.9 12.4,13.9 V10.3"/><path d="M6.8,8.8 L14.6,1.1 M9.6,0.9 H14.8 V6.1"/></g>
<g transform="translate(954.0,234.4)" fill="none" stroke="#2e9a3a" stroke-width="1.75" stroke-linejoin="round"><path d="M5.3,3.6 H1.9 Q0.9,3.6 0.9,4.6 V13.9 Q0.9,14.9 1.9,14.9 H11.4 Q12.4,14.9 12.4,13.9 V10.3"/><path d="M6.8,8.8 L14.6,1.1 M9.6,0.9 H14.8 V6.1"/></g>
<g transform="translate(1284.3,234.4)" fill="none" stroke="#2e9a3a" stroke-width="1.75" stroke-linejoin="round"><path d="M5.3,3.6 H1.9 Q0.9,3.6 0.9,4.6 V13.9 Q0.9,14.9 1.9,14.9 H11.4 Q12.4,14.9 12.4,13.9 V10.3"/><path d="M6.8,8.8 L14.6,1.1 M9.6,0.9 H14.8 V6.1"/></g>
<g transform="translate(1614.7,237.2)" fill="none" stroke="#2e9a3a" stroke-width="1.75" stroke-linejoin="round"><path d="M5.3,3.6 H1.9 Q0.9,3.6 0.9,4.6 V13.9 Q0.9,14.9 1.9,14.9 H11.4 Q12.4,14.9 12.4,13.9 V10.3"/><path d="M6.8,8.8 L14.6,1.1 M9.6,0.9 H14.8 V6.1"/></g>
<g transform="translate(1945.1,237.2)" fill="none" stroke="#2e9a3a" stroke-width="1.75" stroke-linejoin="round"><path d="M5.3,3.6 H1.9 Q0.9,3.6 0.9,4.6 V13.9 Q0.9,14.9 1.9,14.9 H11.4 Q12.4,14.9 12.4,13.9 V10.3"/><path d="M6.8,8.8 L14.6,1.1 M9.6,0.9 H14.8 V6.1"/></g>
<g transform="translate(192,291.2)"><path d="M0.5,0.4 L6,6.6 L9.5,2.1 L14.6,7.9" fill="none" stroke="#ea3d56" stroke-width="1.5" stroke-linecap="round" stroke-linejoin="round"/><path d="M16.8,4.6 L16.8,9.8 L11.6,9.8 Z" fill="#ea3d56"/></g>
<g transform="translate(506.8,284.7)"><path d="M0.5,0.4 L6,6.6 L9.5,2.1 L14.6,7.9" fill="none" stroke="#ea3d56" stroke-width="1.5" stroke-linecap="round" stroke-linejoin="round"/><path d="M16.8,4.6 L16.8,9.8 L11.6,9.8 Z" fill="#ea3d56"/></g>
<g transform="translate(837.2,284.7)"><path d="M0.5,0.4 L6,6.6 L9.5,2.1 L14.6,7.9" fill="none" stroke="#ea3d56" stroke-width="1.5" stroke-linecap="round" stroke-linejoin="round"/><path d="M16.8,4.6 L16.8,9.8 L11.6,9.8 Z" fill="#ea3d56"/></g>
<g transform="translate(1158.4,291.4)"><path d="M0.5,9.3 L5.6,4 L9.2,7.4 L14.4,2" fill="none" stroke="#2fb457" stroke-width="1.5" stroke-linecap="round" stroke-linejoin="round"/><path d="M11.4,0.2 L16.4,0.2 L16.4,5.2 Z" fill="#2fb457"/></g>
<g transform="translate(1498.5,288.3)"><path d="M0.5,0.4 L6,6.6 L9.5,2.1 L14.6,7.9" fill="none" stroke="#ea3d56" stroke-width="1.5" stroke-linecap="round" stroke-linejoin="round"/><path d="M16.8,4.6 L16.8,9.8 L11.6,9.8 Z" fill="#ea3d56"/></g>
<g transform="translate(1813.6,288.3)"><path d="M0.5,0.4 L6,6.6 L9.5,2.1 L14.6,7.9" fill="none" stroke="#ea3d56" stroke-width="1.5" stroke-linecap="round" stroke-linejoin="round"/><path d="M16.8,4.6 L16.8,9.8 L11.6,9.8 Z" fill="#ea3d56"/></g>
<path d="M1953.2,37.6 L1959.9,44.6 L1966.6000000000001,37.6" fill="none" stroke="#c5d4e8" stroke-width="2.6" stroke-linecap="round" stroke-linejoin="round"/>
<path d="M1603.4,162.8 L1609.0,169.0 L1614.6000000000001,162.8" fill="none" stroke="#666" stroke-width="1.9" stroke-linecap="round" stroke-linejoin="round"/>
<g transform="translate(1782.2,154.1)" fill="none" stroke="#7a7a7a" stroke-width="1.4"><rect x="0.7" y="2.6" width="15.4" height="14" rx="2.2"/><path d="M0.7,7 H16.1 M4.9,0.3 V4.2 M11.9,0.3 V4.2" stroke-linecap="round"/></g><g transform="translate(1782.2,154.1)" fill="#7a7a7a"><rect x="3.9" y="9.1" width="1.7" height="1.6" rx="0.3"/><rect x="8.0" y="9.1" width="1.7" height="1.6" rx="0.3"/><rect x="12.1" y="9.1" width="1.7" height="1.6" rx="0.3"/><rect x="3.9" y="12.6" width="1.7" height="1.6" rx="0.3"/><rect x="8.0" y="12.6" width="1.7" height="1.6" rx="0.3"/></g>
<g transform="translate(1947.2,154.1)" fill="none" stroke="#7a7a7a" stroke-width="1.4"><rect x="0.7" y="2.6" width="15.4" height="14" rx="2.2"/><path d="M0.7,7 H16.1 M4.9,0.3 V4.2 M11.9,0.3 V4.2" stroke-linecap="round"/></g><g transform="translate(1947.2,154.1)" fill="#7a7a7a"><rect x="3.9" y="9.1" width="1.7" height="1.6" rx="0.3"/><rect x="8.0" y="9.1" width="1.7" height="1.6" rx="0.3"/><rect x="12.1" y="9.1" width="1.7" height="1.6" rx="0.3"/><rect x="3.9" y="12.6" width="1.7" height="1.6" rx="0.3"/><rect x="8.0" y="12.6" width="1.7" height="1.6" rx="0.3"/></g>
<g transform="translate(58,493.9)"><path d="M-7.5,-5.3 Q-7.5,-7.4 -5.4,-7.4 Q-3.4,-7.4 -3.2,-5.2 Q-3.1,-3.3 -4.7,-2.3 Q-3,2.4 1.7,4.2 Q2.9,2.6 4.9,2.7 Q7.4,2.9 7.4,5 Q7.4,7.4 4.9,7.4 Q-1.3,6.9 -4.6,2.9 Q-7.5,-0.8 -7.5,-5.3 Z" fill="#666"/></g>
<circle cx="312.7" cy="494" r="8.6" fill="none" stroke="#5a5a5a" stroke-width="1.3"/><rect x="311.9" y="492.4" width="1.6" height="6" fill="#5a5a5a"/><circle cx="312.7" cy="489.8" r="1.05" fill="#5a5a5a"/>
<g transform="translate(57.6,1110.7)" fill="none" stroke="#636b6f" stroke-width="1.5" stroke-linejoin="round"><path d="M-5.6,-9.9 L-9.2,-5.7 V0.1 Q-9.2,0.9 -8.4,0.9 H-3.4 Q-2.8,0.9 -2.5,0.3 L-0.4,-4.2 Q-0.1,-5.1 -1,-5.1 H-5.6 L-5,-9.3 Q-5.1,-10 -5.6,-9.9 Z"/><path d="M-5.6,-9.9 L-9.2,-5.7 V0.1 Q-9.2,0.9 -8.4,0.9 H-3.4 Q-2.8,0.9 -2.5,0.3 L-0.4,-4.2 Q-0.1,-5.1 -1,-5.1 H-5.6 L-5,-9.3 Q-5.1,-10 -5.6,-9.9 Z" transform="rotate(180)"/></g>
<circle cx="284.5" cy="1111.2" r="8.6" fill="none" stroke="#5a5a5a" stroke-width="1.3"/><rect x="283.7" y="1109.6000000000001" width="1.6" height="6" fill="#5a5a5a"/><circle cx="284.5" cy="1107.0" r="1.05" fill="#5a5a5a"/>
<rect x="801.3" y="993.2" width="16.3" height="15.7" rx="2.5" fill="#9b59b6"/>
<rect x="916.1" y="993.2" width="16.3" height="15.7" rx="2.5" fill="#2ecc71"/>
<rect x="1058.6" y="993.2" width="16.3" height="15.7" rx="2.5" fill="#f1c40f"/>
<rect x="1559.4" y="1153.10" width="21.4" height="21" rx="4" fill="#4caf50"/>
<path d="M1565.8,1163.90 L1568.9,1167.00 L1574.8,1160.70" fill="none" stroke="#fff" stroke-width="2.6" stroke-linecap="round" stroke-linejoin="round"/>
<rect x="1595.4" y="1156.10" width="15.3" height="15" rx="2.5" fill="#2c7be5"/>
<rect x="1559.4" y="1197.97" width="21.4" height="21" rx="4" fill="#4caf50"/>
<path d="M1565.8,1208.77 L1568.9,1211.87 L1574.8,1205.57" fill="none" stroke="#fff" stroke-width="2.6" stroke-linecap="round" stroke-linejoin="round"/>
<rect x="1595.4" y="1200.97" width="15.3" height="15" rx="2.5" fill="#2ecc71"/>
<rect x="1559.4" y="1242.84" width="21.4" height="21" rx="4" fill="#4caf50"/>
<path d="M1565.8,1253.64 L1568.9,1256.74 L1574.8,1250.44" fill="none" stroke="#fff" stroke-width="2.6" stroke-linecap="round" stroke-linejoin="round"/>
<rect x="1595.4" y="1245.84" width="15.3" height="15" rx="2.5" fill="#f39c12"/>
<rect x="1559.4" y="1287.71" width="21.4" height="21" rx="4" fill="#4caf50"/>
<path d="M1565.8,1298.51 L1568.9,1301.61 L1574.8,1295.31" fill="none" stroke="#fff" stroke-width="2.6" stroke-linecap="round" stroke-linejoin="round"/>
<rect x="1595.4" y="1290.71" width="15.3" height="15" rx="2.5" fill="#e74c3c"/>
<text x="18.00" y="35.10" font-size="30" font-weight="bold" fill="#333" style="letter-spacing:0.303px">Звіт CSAT для керівників</text>
<text x="18.00" y="69.00" font-size="17.8" fill="#666" style="letter-spacing:0.649px">Оцінка якості обслуговування клієнтів та аналіз задоволеності</text>
<text x="1714.70" y="46.90" font-size="19" fill="#4a4a4a" style="letter-spacing:-0.127px">main quiz</text>
<text x="32.50" y="168.75" font-size="19.5" font-weight="bold" fill="#111" style="letter-spacing:0.333px">Загальний звіт</text>
<text x="225.80" y="168.75" font-size="19.5" fill="#6b6b6b" style="letter-spacing:0.477px">По співробітниках</text>
<text x="1148.30" y="170.30" font-size="18.5" fill="#4a4a4a" style="letter-spacing:-0.220px">Оберіть відділ</text>
<text x="1669.70" y="170.30" font-size="18" fill="#4a4a4a" style="letter-spacing:-0.220px">03.03.2026</text>
<text x="1833.70" y="170.30" font-size="18" fill="#4a4a4a" style="letter-spacing:-0.186px">03.04.2026</text>
<text x="96.90" y="255.00" font-size="16" font-weight="bold" fill="#606060" style="letter-spacing:0.380px">Всі дзвінки</text>
<text x="97.40" y="305.10" font-size="27.5" font-weight="bold" fill="#212529" style="letter-spacing:0.331px">19603</text>
<text x="217.60" y="302.00" font-size="15" fill="#e5484d" style="letter-spacing:-0.258px">-31.2%</text>
<text x="428.00" y="255.00" font-size="16" font-weight="bold" fill="#606060" style="letter-spacing:0.394px">Дзвінки з CSAT</text>
<text x="428.00" y="298.80" font-size="27.5" font-weight="bold" fill="#212529" style="letter-spacing:0.372px">4946</text>
<text x="532.40" y="294.80" font-size="15" fill="#e5484d" style="letter-spacing:-0.318px">-21.2%</text>
<text x="428.40" y="330.50" font-size="14.5" fill="#8a8a8a" style="letter-spacing:0.501px">із 19 603 дзвінків</text>
<text x="758.10" y="255.00" font-size="16" font-weight="bold" fill="#606060" style="letter-spacing:0.533px">Дзвінки з оцінкою</text>
<text x="758.80" y="298.80" font-size="27.5" font-weight="bold" fill="#212529" style="letter-spacing:0.172px">2337</text>
<text x="862.40" y="294.80" font-size="15" fill="#e5484d" style="letter-spacing:-0.058px">-25.9%</text>
<text x="758.80" y="330.50" font-size="14.5" fill="#8a8a8a" style="letter-spacing:0.530px">із 4 946 дзвінків</text>
<text x="1089.00" y="255.00" font-size="16" font-weight="bold" fill="#606060" style="letter-spacing:0.373px">Середня оцінка</text>
<text x="1089.00" y="305.10" font-size="27.5" font-weight="bold" fill="#212529" style="letter-spacing:-0.067px">4.7</text>
<text x="1183.50" y="302.00" font-size="15" fill="#2fb457" style="letter-spacing:-0.584px">3.1%</text>
<text x="1419.00" y="246.90" font-size="16" font-weight="bold" fill="#606060" style="letter-spacing:0.471px">Позитивні оцінки (5-</text>
<text x="1420.00" y="267.70" font-size="16" font-weight="bold" fill="#606060" style="letter-spacing:0.502px">6)</text>
<text x="1420.00" y="302.50" font-size="27.5" font-weight="bold" fill="#212529" style="letter-spacing:-0.794px">2081</text>
<text x="1523.80" y="298.40" font-size="15" fill="#e5484d" style="letter-spacing:-0.360px">-22%</text>
<text x="1419.60" y="334.00" font-size="14.5" fill="#8a8a8a" style="letter-spacing:0.565px">з 2 337 оцінок</text>
<text x="1749.30" y="246.90" font-size="16" font-weight="bold" fill="#606060" style="letter-spacing:0.510px">Негативні оцінки (1-</text>
<text x="1750.30" y="267.70" font-size="16" font-weight="bold" fill="#606060" style="letter-spacing:0.802px">2)</text>
<text x="1749.30" y="302.50" font-size="27.5" font-weight="bold" fill="#212529" style="letter-spacing:0.456px">170</text>
<text x="1838.30" y="298.40" font-size="15" fill="#e5484d" style="letter-spacing:-0.198px">-46.9%</text>
<text x="1750.00" y="334.00" font-size="14.5" fill="#8a8a8a" style="letter-spacing:0.565px">з 2 337 оцінок</text>
<text x="17.00" y="413.00" font-size="25.5" font-weight="bold" fill="#333" style="letter-spacing:-0.015px">Динаміка обсягу та якості CSAT</text>
<text x="1701.80" y="411.30" font-size="18.5" fill="#fff" style="letter-spacing:0.089px">День</text>
<text x="1785.20" y="411.30" font-size="18.5" fill="#666" style="letter-spacing:0.067px">Тиждень</text>
<text x="1899.40" y="411.30" font-size="18.5" fill="#666" style="letter-spacing:0.223px">Місяць</text>
<text x="88.20" y="502.00" font-size="25" font-weight="bold" fill="#333" style="letter-spacing:0.182px">Обсяги дзвінків</text>
<text x="88.60" y="1119.00" font-size="25" font-weight="bold" fill="#333" style="letter-spacing:0.305px">Якість оцінок</text>
<text x="827.10" y="1005.70" font-size="13.5" fill="#333" style="letter-spacing:0.110px">Всі дзвінки</text>
<text x="942.50" y="1005.70" font-size="13.5" fill="#333" style="letter-spacing:0.031px">Дзвінки з CSAT</text>
<text x="1084.60" y="1005.70" font-size="13.5" fill="#333" style="letter-spacing:0.112px">Дзвінки з оцінкою</text>
<text x="1621.20" y="1169.90" font-size="17.5" fill="#5a5a5a" style="letter-spacing:0.297px">Середня оцінка (ліва шкала)</text>
<text x="1620.20" y="1214.80" font-size="17.5" fill="#5a5a5a" style="letter-spacing:0.521px">Позитивні оцінки, % (права шкала)</text>
<text x="1620.20" y="1259.50" font-size="17.5" fill="#5a5a5a" style="letter-spacing:0.478px">Нормальні оцінки, % (права шкала)</text>
<text x="1620.20" y="1304.40" font-size="17.5" fill="#5a5a5a" style="letter-spacing:0.496px">Негативні оцінки, % (права шкала)</text>
</svg>

<!-- scrollbar + bottom -->
<div class="abs" style="left:1977px;top:0;width:22px;height:1670px;background:#fafafa;border-left:1.25px solid #e7e7e7"></div>
<div class="abs" style="left:0;top:1668.6px;width:1999px;height:2px;background:#000"></div>
</div></body></html>
